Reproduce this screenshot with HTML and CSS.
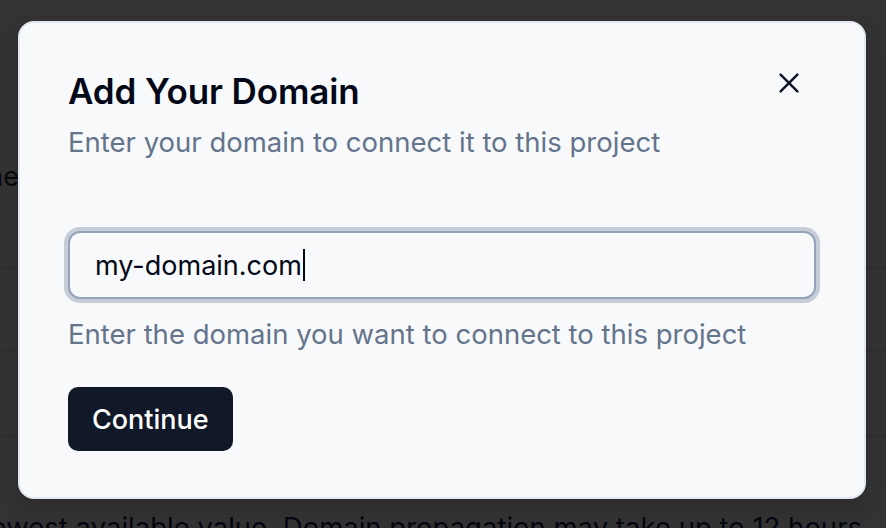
FILE: index.html
```html
<!DOCTYPE html>
<html lang="en">
<head>
<meta charset="utf-8">
<title>Add Your Domain</title>
<link rel="stylesheet" href="styles.css">
</head>
<body>
<div class="page">
  <div class="bg-row bg-first"><div class="bg-clip"><span class="bg-text">Domain name</span></div></div>
  <div class="bg-row bg-line"></div>
  <div class="bg-row bg-line bg-line-last"></div>
  <div class="bg-clip bg-note-wrap"><p class="bg-note">the lowest available value. Domain propagation may take up to 12 hours</p></div>
</div>
<div class="overlay"></div>
<div class="dialog" role="dialog" aria-labelledby="dlg-title">
  <div class="dialog-head">
    <h2 id="dlg-title" class="dialog-title">Add Your Domain</h2>
    <button class="close" aria-label="Close">
      <svg width="24" height="24" viewBox="0 0 24 24" fill="none" stroke="currentColor" stroke-width="2.5" stroke-linecap="round"><path d="M3.6 3.6L20.4 20.4M20.4 3.6L3.6 20.4"/></svg>
    </button>
  </div>
  <p class="dialog-desc">Enter your domain to connect it to this project</p>
  <div class="field">
    <div class="input"><span class="value">my-domain.com</span><span class="caret"></span></div>
    <p class="hint">Enter the domain you want to connect to this project</p>
  </div>
  <button class="btn">Continue</button>
</div>
</body>
</html>
```

FILE: styles.css
```css
html, body {
  margin: 0;
  padding: 0;
  height: 100%;
  overflow: hidden;
  font-family: Inter, "Noto Sans", sans-serif;
}
body {
  background: #ffffff;
  position: relative;
}
.page {
  padding-top: 158px;
}
.bg-row {
  border-bottom: 1px solid #cbd5e1;
}
.bg-first {
  height: 110px;
}
.bg-clip {
  display: flex;
  justify-content: flex-end;
  width: 19px;
}
.bg-text {
  display: block;
  padding-top: 2px;
  font-size: 27px;
  line-height: 34px;
  color: #1e293b;
  white-space: nowrap;
}
.bg-line {
  height: 81px;
}
.bg-line-last {
  height: 84px;
}
.bg-note-wrap {
  width: 862px;
  padding-top: 74px;
}
.bg-note {
  margin: 0;
  font-size: 27.5px;
  line-height: 34px;
  color: #172554;
  white-space: nowrap;
  flex-shrink: 0;
}
.overlay {
  position: absolute;
  inset: 0;
  background: rgba(0, 0, 0, 0.8);
}
.dialog {
  position: absolute;
  left: 18px;
  top: 21px;
  width: 848px;
  height: 478px;
  box-sizing: border-box;
  padding: 46px 48px 0 48px;
  background: #f8f9fb;
  border: 2px solid #e2e8f0;
  border-radius: 16px;
  box-shadow: 0 10px 20px rgba(0,0,0,0.15);
  display: flex;
  flex-direction: column;
}
.dialog-head {
  display: flex;
  justify-content: space-between;
  align-items: flex-start;
}
.dialog-title {
  margin: 0;
  font-size: 35px;
  font-weight: 600;
  line-height: 44px;
  color: #020817;
  letter-spacing: -0.1px;
}
.close {
  margin: 2px 15px 0 0;
  padding: 0;
  border: 0;
  background: none;
  color: #0f172a;
  width: 24px;
  height: 24px;
  display: flex;
}
.dialog-desc {
  margin: 11px 0 0 0;
  font-size: 27.5px;
  line-height: 36px;
  color: #64748b;
}
.field {
  margin-top: 71px;
}
.input {
  box-sizing: border-box;
  height: 68px;
  border: 2px solid #94a3b8;
  border-radius: 12px;
  box-shadow: 0 0 0 4px #c6ccd8;
  background: #f8f9fb;
  display: flex;
  align-items: center;
  padding-left: 25px;
  font-size: 27px;
  color: #020817;
}
.caret {
  display: inline-block;
  width: 2px;
  height: 32px;
  background: #020817;
  margin-left: 1px;
}
.hint {
  margin: 17px 0 0 0;
  font-size: 27.5px;
  line-height: 36px;
  color: #64748b;
}
.btn {
  align-self: flex-start;
  margin-top: 35px;
  height: 64px;
  padding: 0 24px;
  border: 0;
  border-radius: 10px;
  background: #111827;
  color: #ffffff;
  font-family: inherit;
  font-size: 27px;
  font-weight: 500;
}
```
